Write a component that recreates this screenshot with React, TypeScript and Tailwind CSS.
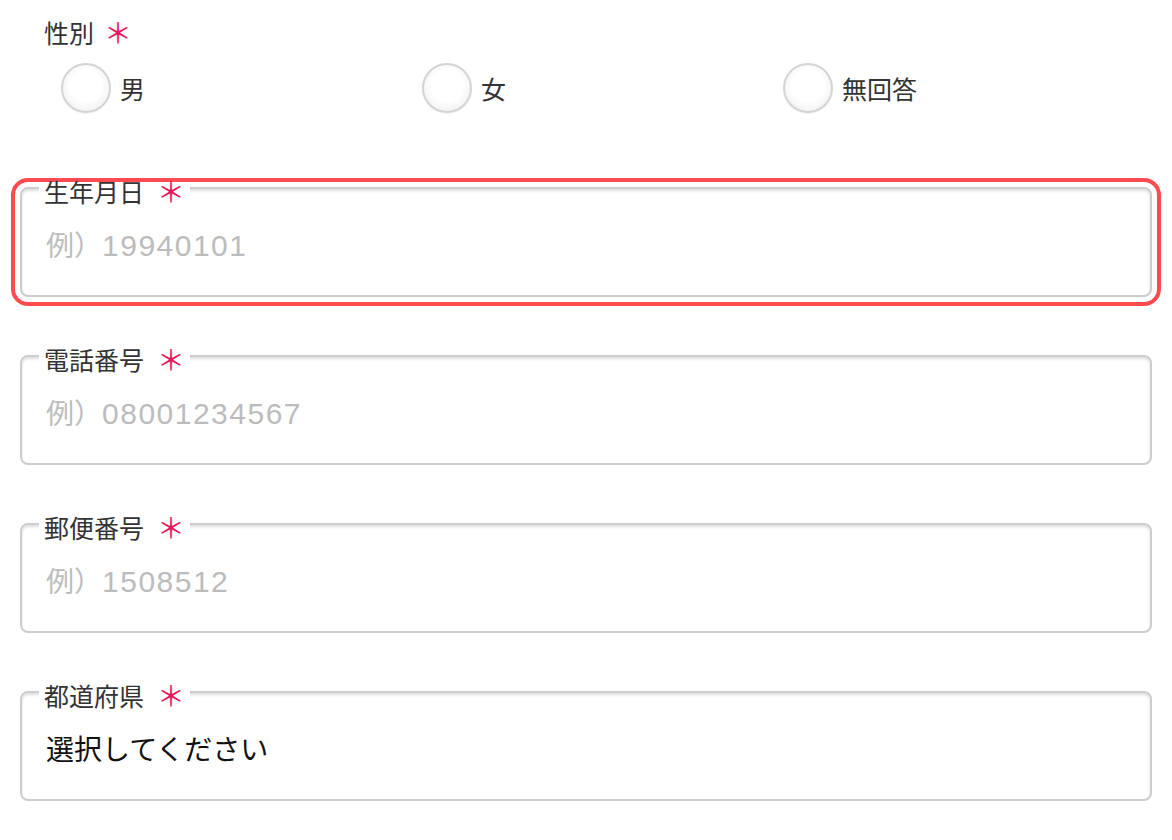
import React from "react";

const font = { fontFamily: '"Noto Sans CJK JP", "Noto Sans", sans-serif' };
const digitFont = { fontFamily: '"Liberation Sans", "Noto Sans CJK JP", sans-serif' };

function Radio({ label }: { label: string }) {
  return (
    <div className="flex items-center gap-[9px]">
      <div className="w-[50px] h-[50px] rounded-full border-2 border-[#d4d4d4] bg-[radial-gradient(circle_at_50%_45%,#ffffff_45%,#f1f1f1_80%,#e4e4e4_100%)] shadow-[0_1px_1px_rgba(0,0,0,0.05)]" />
      <span className="text-[25px] leading-[28px] text-[#333]">{label}</span>
    </div>
  );
}

function Field({
  label,
  value,
  prefix,
  digits,
  focused,
}: {
  label: string;
  value?: string;
  prefix?: string;
  digits?: string;
  focused?: boolean;
}) {
  return (
    <div
      className={
        "relative h-[110px] rounded-[8px] border-2 border-[#cdcdcd] bg-white shadow-[inset_0_2px_3px_rgba(0,0,0,0.13)] " +
        (focused ? "outline-4 outline-solid outline-offset-[5px] outline-[#ff4b4f]" : "")
      }
    >
      <div className="absolute left-[17px] top-[-12px] flex items-center bg-[linear-gradient(to_bottom,transparent_6px,#ffffff_6px)] px-[5px] leading-[28px]">
        <span className="text-[25px] text-[#333]">{label}</span>
        <span className="ml-[13px] text-[28px] leading-[28px] text-[#e8175d]">＊</span>
      </div>
      <div className="pl-[24px] pt-[35px] text-[28px] leading-[40px] flex items-baseline">
        {value ? (
          <span className="text-[#111]">{value}</span>
        ) : (
          <>
            <span className="text-[#bcbcbc] text-[28px]">{prefix}</span>
            <span className="text-[#bcbcbc] text-[30px] tracking-[1.5px]" style={digitFont}>
              {digits}
            </span>
          </>
        )}
      </div>
    </div>
  );
}

export default function App() {
  return (
    <div className="w-[1172px] h-[840px] bg-white px-5 pt-[18px] overflow-hidden" style={font}>
      <div className="pl-[24px] flex items-center leading-[28px]">
        <span className="text-[25px] text-[#333]">性別</span>
        <span className="ml-[10px] text-[28px] text-[#e8175d]">＊</span>
      </div>
      <div className="mt-[17px] pl-[41px] grid grid-cols-3 w-[1124px]">
        <Radio label="男" />
        <Radio label="女" />
        <Radio label="無回答" />
      </div>
      <div className="mt-[74px] flex flex-col gap-[58px]">
        <Field label="生年月日" prefix="例）" digits="19940101" focused />
        <Field label="電話番号" prefix="例）" digits="08001234567" />
        <Field label="郵便番号" prefix="例）" digits="1508512" />
        <Field label="都道府県" value="選択してください" />
      </div>
    </div>
  );
}
